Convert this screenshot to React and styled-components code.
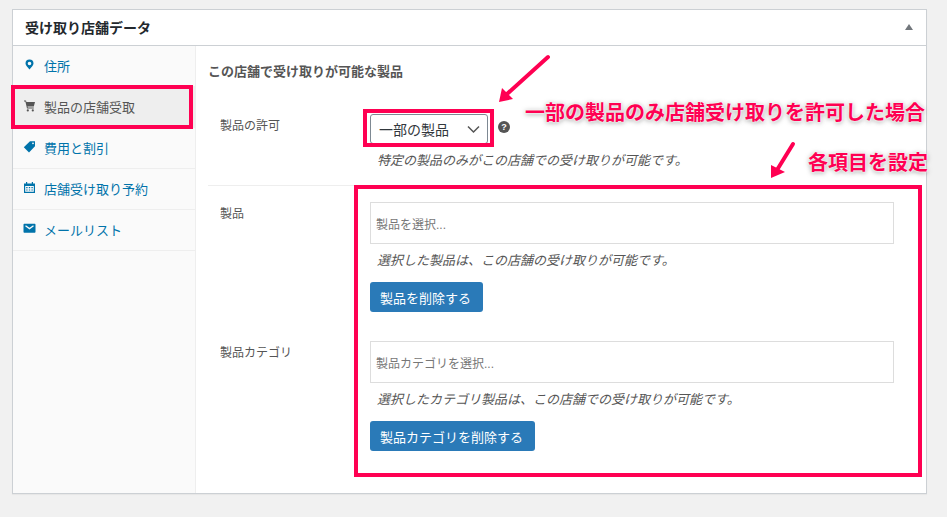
import React from 'react'
import styled, { createGlobalStyle } from 'styled-components'

const Global = createGlobalStyle`
  html, body { margin: 0; padding: 0; background: #f1f1f1; }
  body {
    font-family: "Liberation Sans", "Noto Sans CJK JP", sans-serif;
    font-size: 13px;
    color: #555;
  }
`

const Page = styled.div`
  position: relative;
  width: 947px;
  height: 517px;
  padding: 9px 20px 23px 12px;
  box-sizing: border-box;
  overflow: hidden;
`

const Panel = styled.section`
  height: 485px;
  box-sizing: border-box;
  display: flex;
  flex-direction: column;
  background: #fff;
  border: 1px solid #ccd0d4;
  box-shadow: 0 1px 1px rgba(0, 0, 0, 0.04);
`

const PanelHead = styled.header`
  height: 33px;
  flex: none;
  display: flex;
  align-items: center;
  justify-content: space-between;
  padding: 0 13px 2px 12px;
  border-bottom: 1px solid #ccd0d4;
  font-size: 14px;
  font-weight: 700;
  color: #23282d;
`

const Caret = styled.span`
  width: 0;
  height: 0;
  border-left: 4px solid transparent;
  border-right: 4px solid transparent;
  border-bottom: 6px solid #72777c;
`

const PanelBody = styled.div`
  flex: 1;
  display: flex;
  min-height: 0;
`

const Sidebar = styled.ul`
  width: 182px;
  flex: none;
  margin: 0;
  padding: 0;
  list-style: none;
  background: #fafafa;
  border-right: 1px solid #eee;
`

const TabItem = styled.li`
  height: 41px;
  box-sizing: border-box;
  display: flex;
  align-items: center;
  gap: 8px;
  padding: 0 0 2px 10px;
  border-bottom: 1px solid #eee;
  color: ${props => (props.$active ? '#555' : '#0073aa')};
  background: ${props => (props.$active ? '#eee' : 'transparent')};
  svg { flex: none; margin-top: -1px; }
`

const Main = styled.div`
  flex: 1;
  padding: 14px 12px 0;
  min-width: 0;
`

const Heading = styled.h4`
  margin: 0 0 31px;
  font-size: 13px;
  line-height: 23px;
  font-weight: 700;
  color: #555;
`

const FormRow = styled.div`
  display: flex;
  padding: ${props => props.$pad || '0'};
  border-bottom: ${props => (props.$rule ? '1px solid #eee' : 'none')};
`

const RowLabel = styled.div`
  width: 162px;
  box-sizing: border-box;
  flex: none;
  padding: ${props => props.$top}px 0 0 12px;
  font-size: 12px;
  line-height: 18px;
`

const Field = styled.div`
  flex: 1;
  min-width: 0;
`

const SelectLine = styled.div`
  display: flex;
  align-items: center;
  gap: 10px;
`

const Select = styled.div`
  width: 118px;
  height: 30px;
  box-sizing: border-box;
  display: flex;
  align-items: center;
  justify-content: space-between;
  padding: 0 6px 0 8px;
  background: #fff;
  border: 1px solid #7e8993;
  border-radius: 3px;
  font-size: 14px;
  color: #32373c;
`

const Help = styled.p`
  margin: 7px 0 0;
  padding-left: 7px;
  font-size: 13px;
  line-height: 20px;
  font-style: italic;
  color: #555;
`

const SearchBox = styled.div`
  width: 524px;
  height: 42px;
  box-sizing: border-box;
  display: flex;
  align-items: center;
  padding-left: 5px;
  border: 1px solid #ddd;
  font-size: 12px;
  color: #777;
`

const RemoveButton = styled.button`
  display: block;
  height: 30px;
  margin: 11px 0 0;
  padding: 0 12px 0 10px;
  font-family: inherit;
  font-size: 13px;
  color: #fff;
  background: #2a7ab8;
  border: 0;
  border-radius: 3px;
`

const Highlight = styled.div`
  position: absolute;
  box-sizing: border-box;
  border: 4px solid #ff0052;
  left: ${props => props.$x}px;
  top: ${props => props.$y}px;
  width: ${props => props.$w}px;
  height: ${props => props.$h}px;
`

const Note = styled.div`
  position: absolute;
  left: ${props => props.$x}px;
  top: ${props => props.$y}px;
  font-size: 20px;
  line-height: 26px;
  font-weight: 700;
  white-space: nowrap;
  color: #ff0052;
  text-shadow: 0 0 2px #fff, 0 0 3px #fff, 0 1px 5px rgba(0, 0, 0, 0.5);
`

const ArrowLayer = styled.svg`
  position: absolute;
  left: 0;
  top: 0;
  pointer-events: none;
`

const HelpGlyph = styled.svg`
  margin-top: -4px;
`

const PinIcon = () => (
  <svg width="13" height="13" viewBox="0 0 13 13">
    <path fill="#0073aa" fillRule="evenodd" d="M6.500 1.500a4 4 0 0 1 4 4c0 2.200-2.500 4-4 6-1.500-2-4-3.800-4-6a4 4 0 0 1 4-4zm0 2.200a1.800 1.800 0 1 0 0 3.600 1.800 1.800 0 0 0 0-3.600z" />
  </svg>
)

const CartIcon = () => (
  <svg width="13" height="13" viewBox="0 0 13 13">
    <path fill="#555" d="M1 1.500h2l.4 1.500H12l-1.200 4.600H4.500l.3 1h6v1H4L2.400 2.500H1z" />
    <circle fill="#555" cx="4.800" cy="11.400" r="1.100" />
    <circle fill="#555" cx="9.800" cy="11.400" r="1.100" />
  </svg>
)

const TagIcon = () => (
  <svg width="13" height="13" viewBox="0 0 13 13">
    <path fill="#0073aa" fillRule="evenodd" d="M7 1.200h5v5l-6 6.200L.8 7.200zM10 2.400a.9.9 0 1 0 0 1.800.9.9 0 0 0 0-1.800z" />
  </svg>
)

const CalendarIcon = () => (
  <svg width="13" height="13" viewBox="0 0 13 13">
    <path fill="#0073aa" fillRule="evenodd" d="M1 2.500h2V1h1.200v1.500h4.600V1H10v1.500h2V12H1zM2.200 5v5.800h8.600V5z" />
    <path fill="#0073aa" d="M3.200 6h1.400v1.200H3.200zM5.800 6h1.400v1.200H5.800zM8.400 6h1.400v1.200H8.400zM3.200 8.400h1.400v1.200H3.200zM5.800 8.400h1.400v1.200H5.800zM8.400 8.400h1.400v1.200H8.400z" />
  </svg>
)

const MailIcon = () => (
  <svg width="13" height="13" viewBox="0 0 13 13">
    <path fill="#0073aa" d="M1.500 1.700h10c.6 0 1 .4 1 1v7c0 .6-.4 1-1 1h-10c-.6 0-1-.4-1-1v-7c0-.6.4-1 1-1z" />
    <path fill="none" stroke="#fafafa" strokeWidth="1.300" d="M2.500 3.800l4 2.800 4-2.800" />
  </svg>
)

const HelpIcon = () => (
  <HelpGlyph width="12" height="12" viewBox="0 0 12 12">
    <circle cx="6" cy="6" r="6" fill="#555" />
    <text x="6" y="9.300" textAnchor="middle" fontSize="9" fontWeight="700" fill="#fff" fontFamily="Liberation Sans, sans-serif">?</text>
  </HelpGlyph>
)

const Chevron = () => (
  <svg width="16" height="16" viewBox="0 0 16 16">
    <path fill="none" stroke="#555" strokeWidth="1.500" d="M3 5.500l5.500 5.500 5.500-5.500" />
  </svg>
)

const tabs = [
  { label: '住所', icon: <PinIcon /> },
  { label: '製品の店舗受取', icon: <CartIcon />, active: true },
  { label: '費用と割引', icon: <TagIcon /> },
  { label: '店舗受け取り予約', icon: <CalendarIcon /> },
  { label: 'メールリスト', icon: <MailIcon /> },
]

const App = () => (
  <Page>
    <Global />
    <Panel>
      <PanelHead>
        受け取り店舗データ
        <Caret />
      </PanelHead>
      <PanelBody>
        <Sidebar>
          {tabs.map(tab => (
            <TabItem key={tab.label} $active={tab.active}>
              {tab.icon}
              {tab.label}
            </TabItem>
          ))}
        </Sidebar>
        <Main>
          <Heading>この店舗で受け取りが可能な製品</Heading>
          <FormRow $rule $pad="0 0 14px">
            <RowLabel $top={3}>製品の許可</RowLabel>
            <Field>
              <SelectLine>
                <Select>
                  一部の製品
                  <Chevron />
                </Select>
                <HelpIcon />
              </SelectLine>
              <Help>特定の製品のみがこの店舗での受け取りが可能です。</Help>
            </Field>
          </FormRow>
          <FormRow $pad="16px 0 0">
            <RowLabel $top={3}>製品</RowLabel>
            <Field>
              <SearchBox>製品を選択...</SearchBox>
              <Help>選択した製品は、この店舗の受け取りが可能です。</Help>
              <RemoveButton>製品を削除する</RemoveButton>
            </Field>
          </FormRow>
          <FormRow $pad="29px 0 0">
            <RowLabel $top={3}>製品カテゴリ</RowLabel>
            <Field>
              <SearchBox>製品カテゴリを選択...</SearchBox>
              <Help>選択したカテゴリ製品は、この店舗での受け取りが可能です。</Help>
              <RemoveButton>製品カテゴリを削除する</RemoveButton>
            </Field>
          </FormRow>
        </Main>
      </PanelBody>
    </Panel>

    <Highlight $x={11} $y={85} $w={182} $h={44} />
    <Highlight $x={363} $y={109} $w={131} $h={38} />
    <Highlight $x={354} $y={185} $w={568} $h={292} />
    <Note $x={525} $y={100}>一部の製品のみ店舗受け取りを許可した場合</Note>
    <Note $x={808} $y={150}>各項目を設定</Note>
    <ArrowLayer width="947" height="517" viewBox="0 0 947 517">
      <g stroke="#ff0052" strokeWidth="4" strokeLinecap="round" fill="none">
        <path d="M548 57L507 94" />
        <path d="M793 144L777 170" />
      </g>
      <path fill="#ff0052" d="M499 102l3-14 11 11z" />
      <path fill="#ff0052" d="M771 178v-13l14 7z" />
    </ArrowLayer>
  </Page>
)

export default App
